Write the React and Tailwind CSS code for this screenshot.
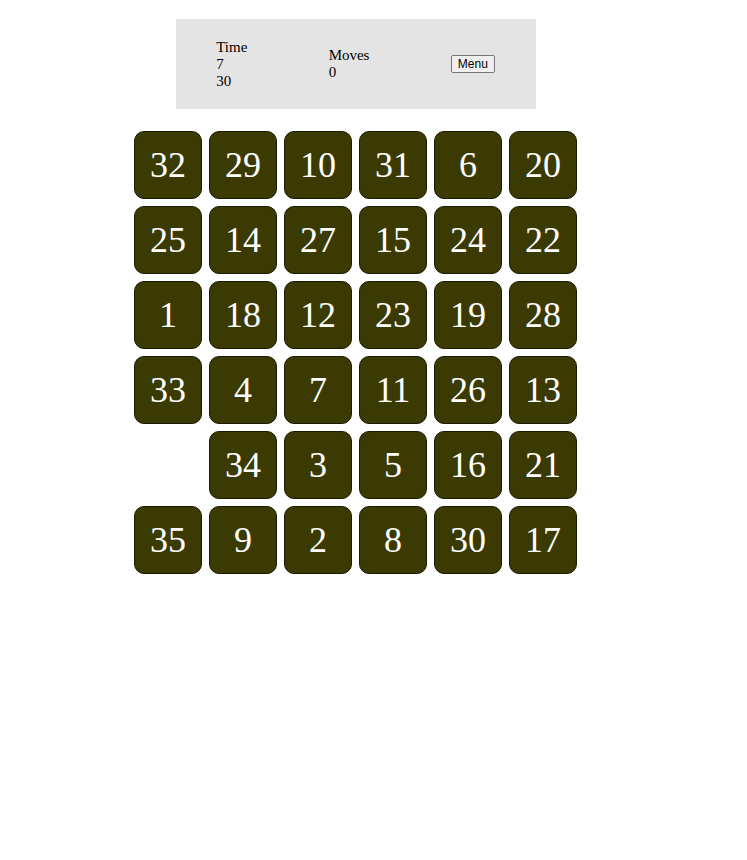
import React from "react";

const tiles = [
  32, 29, 10, 31, 6, 20,
  25, 14, 27, 15, 24, 22,
  1, 18, 12, 23, 19, 28,
  33, 4, 7, 11, 26, 13,
  null, 34, 3, 5, 16, 21,
  35, 9, 2, 8, 30, 17,
];

export default function App() {
  return (
    <div className="w-[711px] min-h-[860px] bg-white flex flex-col items-center pt-[19px] font-['Liberation_Serif',serif] text-black">
      <div className="w-[360px] h-[90px] bg-[#e4e4e4] flex items-center justify-around text-[15px] leading-[17px]">
        <div className="pt-[1px]">
          <div>Time</div>
          <div>7</div>
          <div>30</div>
        </div>
        <div>
          <div>Moves</div>
          <div>0</div>
        </div>
        <button className="h-[18px] px-[6px] border border-[#767676] rounded-[2px] bg-[#efefef] font-['Liberation_Sans',sans-serif] text-[12px] leading-[14px]">
          Menu
        </button>
      </div>

      <div className="mt-[22px] grid grid-cols-[repeat(6,68px)] gap-[7px]">
        {tiles.map((n, i) =>
          n === null ? (
            <div key={i} className="w-[68px] h-[68px]" />
          ) : (
            <div
              key={i}
              className="w-[68px] h-[68px] rounded-[10px] border border-[#1a1a00] bg-[#3b3a03] flex items-center justify-center text-white text-[36px]"
            >
              {n}
            </div>
          )
        )}
      </div>
    </div>
  );
}
